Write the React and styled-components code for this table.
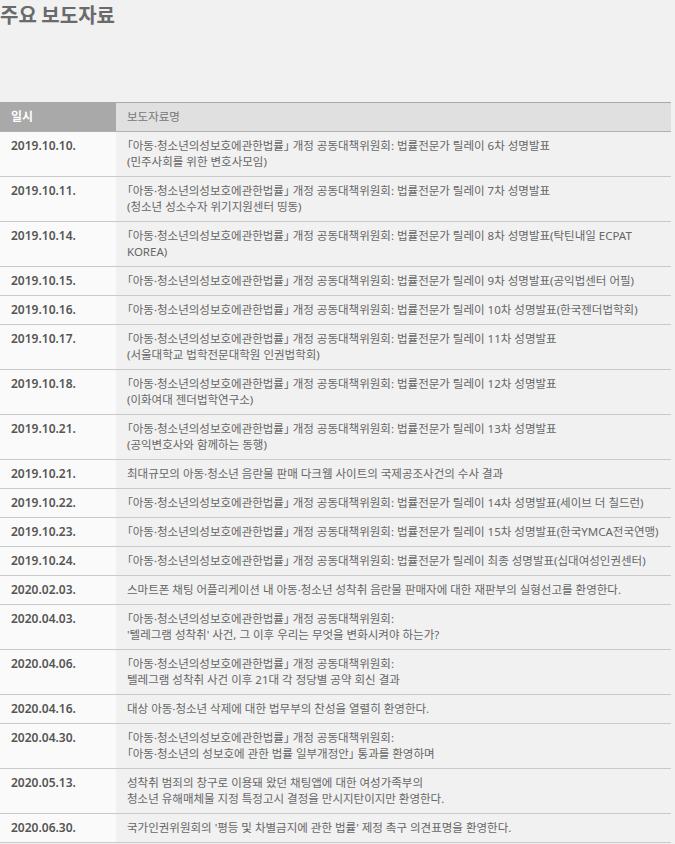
import React from "react";
import styled, { createGlobalStyle } from "styled-components";

const Global = createGlobalStyle`
   body {
      margin:0;
      background:#f1f1f1;
      font-family:"Noto Sans", "Noto Sans CJK KR", sans-serif;
   }
`;

const Page = styled.div`
   width:675px;
`;

const Title = styled.h2`
   margin:0;
   padding-top:1px;
   font-size:20px;
   line-height:28px;
   font-weight:700;
   color:#6a6a6a;
   font-family:"Noto Sans CJK KR", sans-serif;
`;

const Table = styled.div`
   margin-top:73px;
   width:671px;
   border-top:1px solid #a9a9a9;
`;

const Row = styled.div`
   display:grid;
   grid-template-columns:116px 1fr;
   border-bottom:1px solid ${(p) => (p.head ? "#b0b0b0" : "#c9c9c9")};
`;

const DateCell = styled.div`
   padding:6px 0 6px 11px;
   background:${(p) => (p.head ? "#a9a9a9" : "#fafafa")};
   color:${(p) => (p.head ? "#fff" : "#555")};
   font-size:12px;
   font-weight:${(p) => (p.head ? 700 : 600)};
   line-height:16px;
   font-family:"Noto Sans", "Noto Sans CJK KR", sans-serif;
`;

const TitleCell = styled.div`
   padding:6px 8px 6px 11px;
   background:${(p) => (p.head ? "#e0e0e0" : "transparent")};
   color:${(p) => (p.head ? "#777" : "#666")};
   font-size:11.5px;
   line-height:16px;
   font-family:"Noto Sans", "Noto Sans CJK KR", sans-serif;
   font-feature-settings:"palt";
`;

const law = "「아동·청소년의성보호에관한법률」 개정 공동대책위원회: 법률전문가 릴레이";

const items = [
   ["2019.10.10.", [`${law} 6차 성명발표`, "(민주사회를 위한 변호사모임)"]],
   ["2019.10.11.", [`${law} 7차 성명발표`, "(청소년 성소수자 위기지원센터 띵동)"]],
   ["2019.10.14.", [`${law} 8차 성명발표(탁틴내일 ECPAT`, "KOREA)"]],
   ["2019.10.15.", [`${law} 9차 성명발표(공익법센터 어필)`]],
   ["2019.10.16.", [`${law} 10차 성명발표(한국젠더법학회)`]],
   ["2019.10.17.", [`${law} 11차 성명발표`, "(서울대학교 법학전문대학원 인권법학회)"]],
   ["2019.10.18.", [`${law} 12차 성명발표`, "(이화여대 젠더법학연구소)"]],
   ["2019.10.21.", [`${law} 13차 성명발표`, "(공익변호사와 함께하는 동행)"]],
   ["2019.10.21.", ["최대규모의 아동·청소년 음란물 판매 다크웹 사이트의 국제공조사건의 수사 결과"]],
   ["2019.10.22.", [`${law} 14차 성명발표(세이브 더 칠드런)`]],
   ["2019.10.23.", [`${law} 15차 성명발표(한국YMCA전국연맹)`]],
   ["2019.10.24.", [`${law} 최종 성명발표(십대여성인권센터)`]],
   ["2020.02.03.", ["스마트폰 채팅 어플리케이션 내 아동·청소년 성착취 음란물 판매자에 대한 재판부의 실형선고를 환영한다."]],
   ["2020.04.03.", ["「아동·청소년의성보호에관한법률」 개정 공동대책위원회:", "'텔레그램 성착취' 사건, 그 이후 우리는 무엇을 변화시켜야 하는가?"]],
   ["2020.04.06.", ["「아동·청소년의성보호에관한법률」 개정 공동대책위원회:", "텔레그램 성착취 사건 이후 21대 각 정당별 공약 회신 결과"]],
   ["2020.04.16.", ["대상 아동·청소년 삭제에 대한 법무부의 찬성을 열렬히 환영한다."]],
   ["2020.04.30.", ["「아동·청소년의성보호에관한법률」 개정 공동대책위원회:", "「아동·청소년의 성보호에 관한 법률 일부개정안」 통과를 환영하며"]],
   ["2020.05.13.", ["성착취 범죄의 창구로 이용돼 왔던 채팅앱에 대한 여성가족부의", "청소년 유해매체물 지정 특정고시 결정을 만시지탄이지만 환영한다."]],
   ["2020.06.30.", ["국가인권위원회의 '평등 및 차별금지에 관한 법률' 제정 촉구 의견표명을 환영한다."]],
];

const App = () => (
   <Page>
      <Global />
      <Title>주요 보도자료</Title>
      <Table>
         <Row head>
            <DateCell head>일시</DateCell>
            <TitleCell head>보도자료명</TitleCell>
         </Row>
         {items.map(([date, lines], i) => (
            <Row key={i}>
               <DateCell>{date}</DateCell>
               <TitleCell>
                  {lines.map((l, j) => (
                     <div key={j}>{l}</div>
                  ))}
               </TitleCell>
            </Row>
         ))}
      </Table>
   </Page>
);

export default App;
